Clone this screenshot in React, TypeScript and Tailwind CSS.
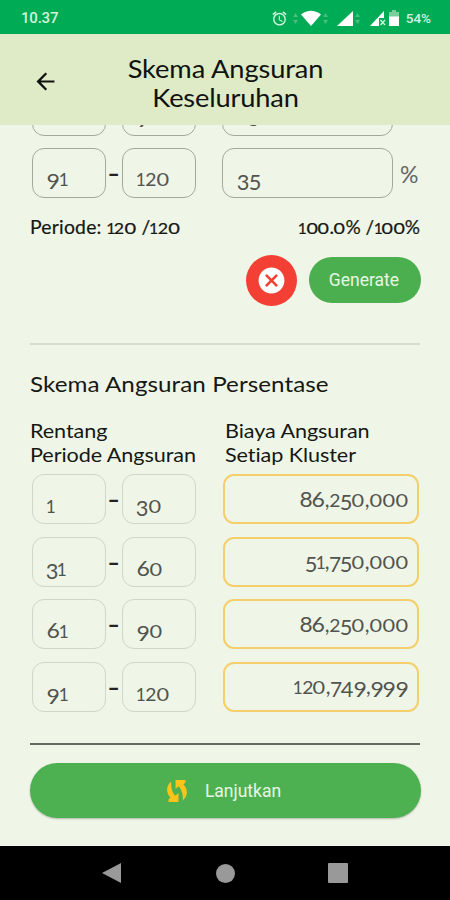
import type { ReactNode } from "react";
import { MdArrowBack, MdCancel, MdAccessAlarm } from "react-icons/md";

// Old-style figures: 0-2 sit at x-height, 3/4/5/7/9 descend, 6 and 8 ascend.
const GLYPHS: Record<string, { box: string; ink: string }> = {
  "0": { box: "w-[0.61em]", ink: "text-[0.78em] scale-x-[1.33]" },
  "1": { box: "w-[0.39em]", ink: "text-[0.78em] scale-x-[1.05]" },
  "2": { box: "w-[0.52em]", ink: "text-[0.78em] scale-x-[1.18]" },
  "3": { box: "w-[0.53em]", ink: "relative top-[0.15em] scale-x-[1.04]" },
  "4": { box: "w-[0.57em]", ink: "relative top-[0.15em] scale-x-[1.04]" },
  "5": { box: "w-[0.54em]", ink: "relative top-[0.15em] scale-x-[1.04]" },
  "6": { box: "w-[0.59em]", ink: "scale-x-[1.1]" },
  "7": { box: "w-[0.52em]", ink: "relative top-[0.15em]" },
  "8": { box: "w-[0.59em]", ink: "scale-x-[1.08]" },
  "9": { box: "w-[0.59em]", ink: "relative top-[0.15em] scale-x-[1.1]" },
  ",": { box: "w-[0.24em]", ink: "" },
};

function Num({ children }: { children: string }) {
  return (
    <span className="whitespace-pre">
      {children.split("").map((c, i) => {
        const g = GLYPHS[c];
        return g ? (
          <span key={i} className={`inline-flex items-baseline justify-center ${g.box}`}>
            <span className={`inline-block ${g.ink}`}>{c}</span>
          </span>
        ) : (
          <span key={i}>{c}</span>
        );
      })}
    </span>
  );
}

function StatusBar() {
  return (
    <div className="flex h-[34px] shrink-0 items-center bg-[#00ab55] pt-0.5 font-[Roboto,sans-serif] text-[#d3f3df]">
      <span className="ml-[21px] text-[15px] font-medium tracking-[-0.2px]">10.37</span>
      <MdAccessAlarm className="ml-auto size-[17px]" />
      <Traffic className="ml-[5px]" />
      <svg className="ml-[3px] h-[16px] w-[20px]" viewBox="0 0 20 16">
        <path d="M0 4.500Q10-3 20 4.500L10 16Z" fill="#fff" />
      </svg>
      <Traffic className="ml-[2px]" />
      <svg className="ml-[9px] h-[15px] w-[16px]" viewBox="0 0 16 15">
        <path d="M16 0V15H0Z" fill="#fff" />
      </svg>
      <Traffic className="ml-[2px]" />
      <svg className="ml-[10px] h-[15px] w-[16px]" viewBox="0 0 16 15">
        <path d="M14 0V7H9V15H0Z" fill="#fff" />
        <path d="M10.500 9l4.500 5M15 9l-4.500 5" stroke="#d3f3df" strokeWidth="1.300" />
      </svg>
      <svg className="ml-[3px] h-[16px] w-[10px]" viewBox="0 0 10 16">
        <path d="M3 0h4v2h3v5H0V2h3Z" fill="#77cf9c" />
        <path d="M0 6.500h10V16H0Z" fill="#fff" />
      </svg>
      <span className="mr-[19px] ml-[7px] text-[13.500px] font-medium">54%</span>
    </div>
  );
}

function Traffic({ className }: { className: string }) {
  return (
    <svg className={`h-[13px] w-[5px] ${className}`} viewBox="0 0 5 13">
      <path d="M0 5L2.500 1 5 5ZM0 8h5L2.500 12Z" fill="#4dbd7f" />
    </svg>
  );
}

function Field({ value, faint }: { value: string; faint?: boolean }) {
  return (
    <div
      className={`flex h-[50px] w-[74px] items-end rounded-[12px] border pl-[14px] text-[21px] leading-[24px] text-[#51544f] ${
        faint ? "border-[#cfd6ca] pb-[4px]" : "border-[#a3a99f] pb-[5px]"
      }`}
    >
      <Num>{value}</Num>
    </div>
  );
}

function Range({ from, to, faint }: { from: string; to: string; faint?: boolean }) {
  return (
    <div className="flex items-center">
      <Field value={from} faint={faint} />
      <span className="w-[16px] pb-[2px] text-center text-[30px] leading-[30px] text-[#222]">
        <span className="inline-block scale-x-[1.15]">-</span>
      </span>
      <Field value={to} faint={faint} />
    </div>
  );
}

function PercentRow({ from, to, value }: { from: string; to: string; value: string }) {
  return (
    <div className="mb-[12.500px] flex h-[50px] items-center pl-[2px]">
      <Range from={from} to={to} />
      <div className="ml-[26px] flex h-[50px] w-[171px] items-end rounded-[12px] border border-[#a3a99f] pb-[6px] pl-[15px] text-[21px] leading-[24px] text-[#51544f]">
        <Num>{value}</Num>
      </div>
      <span className="ml-[7px] pt-[2px] text-[23px] leading-6 text-[#666]">%</span>
    </div>
  );
}

function CostRow({ from, to, value }: { from: string; to: string; value: string }) {
  return (
    <div className="mb-[12.500px] flex h-[50px] items-center pl-[2px]">
      <Range from={from} to={to} faint />
      <div className="ml-[27px] flex h-[50px] w-[196px] items-center justify-end rounded-[11px] border-2 border-[#f4cf6b] pt-[1px] pr-[9px] text-[21px] leading-[24px] text-[#51544f]">
        <Num>{value}</Num>
      </div>
    </div>
  );
}

function Line({ children, className = "" }: { children: ReactNode; className?: string }) {
  return <div className={`whitespace-nowrap ${className}`}>{children}</div>;
}

export default function App() {
  return (
    <div className="flex h-[900px] w-[450px] flex-col overflow-hidden bg-[#eff6e7] font-[Lato,sans-serif] text-[#151814]">
      <StatusBar />
      <header className="flex h-[91px] shrink-0 bg-[#deebc6] text-[#101210]">
        <MdArrowBack className="mt-[34px] ml-[32px] size-[27px]" />
        <div className="-ml-[58px] w-full pt-[20px] text-center text-[25px] leading-[29px]">
          <Line className="scale-x-[1.09] tracking-[-0.1px]">Skema Angsuran</Line>
          <Line className="scale-x-[1.09] tracking-[-0.15px]">Keseluruhan</Line>
        </div>
      </header>

      <main className="flex flex-1 flex-col overflow-hidden pr-[29px] pl-[30px]">
        <div className="-mt-[39.500px]">
          <PercentRow from="61" to="90" value="25" />
          <PercentRow from="91" to="120" value="35" />
        </div>
        <div className="mt-[4px] flex h-[24px] justify-between text-[19px] leading-[24px] [-webkit-text-stroke:0.2px_currentColor]">
          <Line className="origin-left scale-x-[1.02] tracking-[0.2px]">
            Periode: <Num>120 /120</Num>
          </Line>
          <Line className="pr-[1px]">
            <Num>100.0% /100%</Num>
          </Line>
        </div>
        <div className="mt-[16px] flex h-[51px] items-center justify-end gap-[12px]">
          <button className="flex size-[51px] items-center justify-center rounded-full bg-[#f33f34] text-white">
            <MdCancel className="size-[31px]" />
          </button>
          <button className="h-[46px] w-[112px] rounded-full bg-[#4baf4f] pt-[1px] pr-[2px] font-[Roboto,sans-serif] text-[17.500px] text-[#e6f6e2]">
            Generate
          </button>
        </div>
        <hr className="mt-[37.500px] mr-[1px] border-t-2 border-[#d6ddd2]" />
        <Line className="mt-[25px] origin-left scale-x-[1.1] text-[22px] leading-[28px] tracking-[0.05px]">
          Skema Angsuran Persentase
        </Line>
        <div className="mt-[20px] mb-[8px] flex text-[20px] leading-[24px]">
          <div className="w-[195px] origin-left scale-x-[1.08] tracking-[-0.07px]">
            <Line>Rentang</Line>
            <Line>Periode Angsuran</Line>
          </div>
          <div className="origin-left scale-x-[1.08] tracking-[-0.07px]">
            <Line>Biaya Angsuran</Line>
            <Line>Setiap Kluster</Line>
          </div>
        </div>
        <CostRow from="1" to="30" value="86,250,000" />
        <CostRow from="31" to="60" value="51,750,000" />
        <CostRow from="61" to="90" value="86,250,000" />
        <CostRow from="91" to="120" value="120,749,999" />
        <hr className="mt-[19px] mr-[1px] border-t-2 border-[#666962]" />
        <button className="mt-[18px] flex h-[55px] shrink-0 items-center justify-center rounded-full bg-[#4eb151] pt-[1px] pr-[3px] font-[Roboto,sans-serif] text-[17.500px] text-[#e6f6e2] shadow-[0_1px_2px_rgba(0,0,0,0.25)]">
          <svg className="mr-[18px] h-[24px] w-[20px]" viewBox="0 0 20 24" fill="#fcc419">
            <path d="M4.200 2.500C-1 7-1.300 13.500 3.500 18.500L1.500 20.500V23H11.500V14L8.300 16.800C4.500 12.500 4 8 4.200 2.500Z" />
            <path d="M15.800 21.500C21 17 21.300 10.500 16.500 5.500L18.500 3.500V1H8.500V10L11.700 7.200C15.500 11.500 16 16 15.800 21.500Z" />
          </svg>
          Lanjutkan
        </button>
      </main>

      <nav className="flex h-[54px] shrink-0 items-center bg-black">
        <svg className="ml-[102px] h-[20px] w-[19px]" viewBox="0 0 19 20">
          <path d="M19 0V20L0 10Z" fill="#999" />
        </svg>
        <span className="ml-[95px] size-[19px] rounded-full bg-[#999]" />
        <span className="ml-[93px] size-[20px] rounded-[1px] bg-[#999]" />
      </nav>
    </div>
  );
}
